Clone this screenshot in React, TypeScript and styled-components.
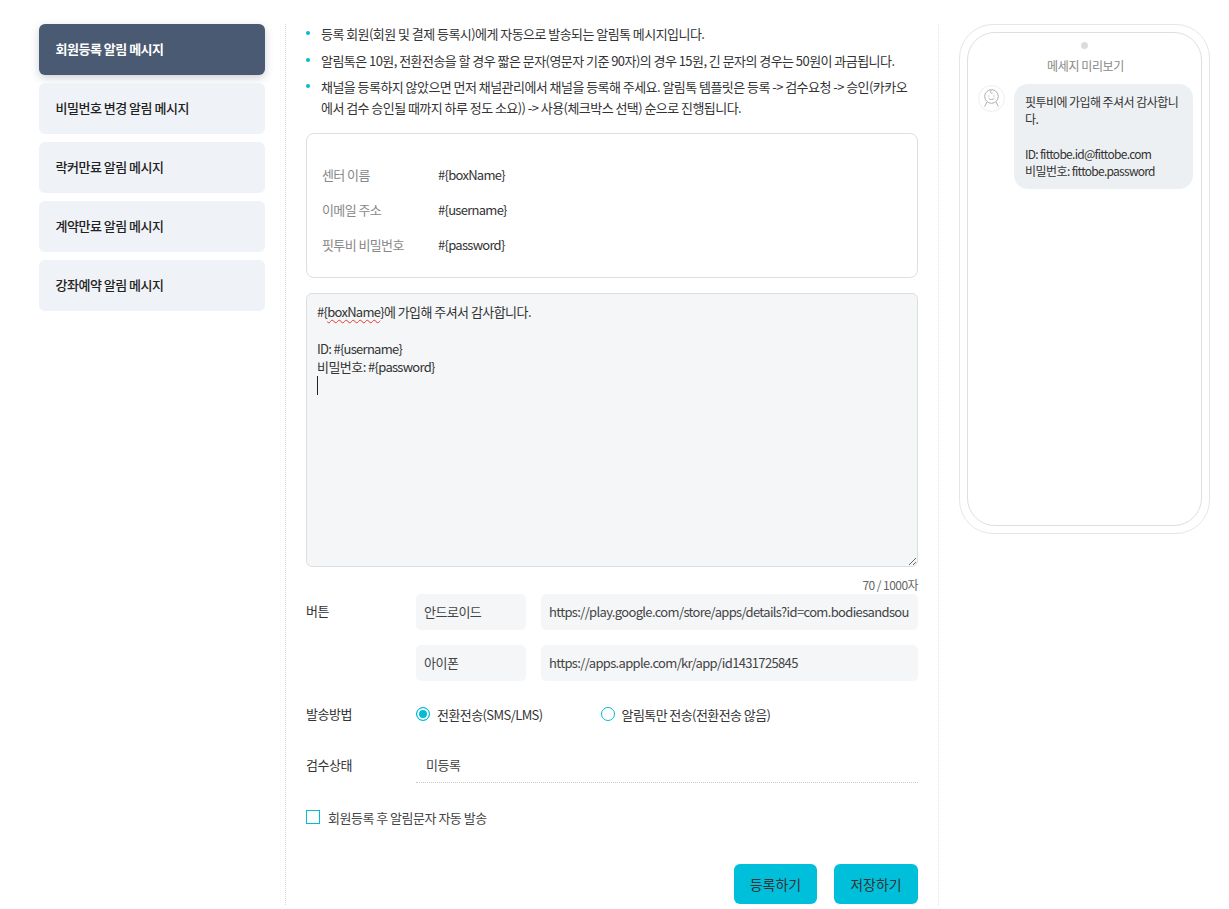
import React from "react";
import styled, { createGlobalStyle } from "styled-components";

const Global = createGlobalStyle`
  html, body { margin: 0; padding: 0; background: #fff; overflow: hidden; }
  body { font-family: "Noto Sans CJK KR", "Noto Sans", sans-serif; color: #333; }
  * { box-sizing: border-box; }
`;

const Page = styled.div`
  width: 1229px;
  height: 909px;
  overflow: hidden;
  display: grid;
  grid-template-columns: 285px 654px 290px;
  padding-top: 24px;
`;

const Sidebar = styled.nav`
  display: flex;
  flex-direction: column;
  gap: 8px;
  padding: 0 20px 0 39px;
`;

const MenuItem = styled.div<{ $active?: boolean }>`
  height: 51px;
  border-radius: 6px;
  padding: 0 16.5px 2px;
  display: flex;
  align-items: center;
  font-size: 13px;
  font-weight: ${(p) => (p.$active ? 700 : 500)};
  letter-spacing: -0.5px;
  color: ${(p) => (p.$active ? "#fff" : "#222")};
  background: ${(p) => (p.$active ? "#4a5a72" : "#eff2f6")};
  box-shadow: ${(p) => (p.$active ? "0 3px 8px rgba(60,70,90,.25)" : "none")};
  position: relative;
`;

const Main = styled.main`
  height: 881px;
  border-left: 1px dotted #d8d8d8;
  border-right: 1px dotted #e2e2e2;
  padding: 0 20px;
  display: flex;
  flex-direction: column;
`;

const Notes = styled.ul`
  list-style: none;
  margin: 0 0 15px;
  padding: 0;
  display: flex;
  flex-direction: column;
  gap: 6px;
`;

const Note = styled.li`
  position: relative;
  padding-left: 15px;
  font-size: 13px;
  line-height: 20.5px;
  letter-spacing: -0.55px;
  color: #333;
  &::before {
    content: "";
    position: absolute;
    left: 0;
    top: 7px;
    width: 4px;
    height: 4px;
    border-radius: 50%;
    background: #00bcd4;
  }
`;

const VarBox = styled.div`
  height: 145px;
  border: 1px solid #dcdfe2;
  border-radius: 8px;
  padding: 23px 15px 0;
  display: flex;
  flex-direction: column;
`;

const VarRow = styled.div`
  height: 35px;
  display: grid;
  grid-template-columns: 116px 1fr;
  align-items: center;
  font-size: 13px;
  letter-spacing: -0.6px;
`;

const VarLabel = styled.span`
  color: #888;
`;

const VarValue = styled.span`
  color: #333;
  letter-spacing: -0.72px;
`;

const Editor = styled.div`
  margin-top: 15px;
  flex: none;
  height: 274px;
  background: #f4f6f8;
  border: 1px solid #dcdfe2;
  border-radius: 6px;
  padding: 9px 10px;
  font-size: 13px;
  line-height: 18.3px;
  letter-spacing: -0.55px;
  color: #333;
  white-space: pre-wrap;
  overflow: auto;
  resize: vertical;
`;

const Latin = styled.span`
  letter-spacing: -0.72px;
`;

const Squiggle = styled.span`
  text-decoration: underline wavy #e53935 1px;
  text-underline-offset: 2px;
`;

const Caret = styled.span`
  display: inline-block;
  width: 1px;
  height: 19px;
  background: #222;
  vertical-align: top;
`;

const Counter = styled.div`
  flex: none;
  height: 27px;
  padding-top: 9px;
  text-align: right;
  font-size: 12px;
  letter-spacing: -0.55px;
  color: #666;
  line-height: 18px;
  white-space: nowrap;
`;

const FormRow = styled.div<{ $h: number; $mt?: number }>`
  display: grid;
  grid-template-columns: 110px 1fr;
  min-height: ${(p) => p.$h}px;
  margin-top: ${(p) => p.$mt ?? 0}px;
  align-items: start;
`;

const RowLabel = styled.div<{ $h: number }>`
  font-size: 13px;
  letter-spacing: -0.5px;
  color: #333;
  line-height: ${(p) => p.$h}px;
`;

const ButtonStack = styled.div`
  display: flex;
  flex-direction: column;
  gap: 15px;
`;

const LinkRow = styled.div`
  display: grid;
  grid-template-columns: 110px 1fr;
  gap: 15px;
`;

const Field = styled.div<{ $url?: boolean }>`
  height: 36px;
  padding: 0 8px;
  border-radius: 5px;
  background: #f4f6f8;
  font-size: 13px;
  line-height: 36px;
  letter-spacing: ${(p) => (p.$url ? "-0.66px" : "-0.5px")};
  color: #444;
  white-space: nowrap;
  overflow: hidden;
`;

const RadioGroup = styled.div`
  display: flex;
  align-items: center;
  height: 36px;
`;

const RadioItem = styled.label<{ $w: number }>`
  display: flex;
  align-items: center;
  gap: 7px;
  width: ${(p) => p.$w}px;
  font-size: 13px;
  letter-spacing: -0.58px;
  color: #333;
`;

const RadioDot = styled.span<{ $on?: boolean }>`
  width: 14px;
  height: 14px;
  border-radius: 50%;
  border: 1.5px solid #00bcd4;
  background: ${(p) => (p.$on ? "#00bcd4" : "#fff")};
  box-shadow: ${(p) => (p.$on ? "inset 0 0 0 2px #fff" : "none")};
  flex: none;
`;

const StatusValue = styled.div`
  height: 36px;
  padding: 0 10px;
  border-bottom: 1px dotted #c8c8c8;
  font-size: 13px;
  line-height: 36px;
  letter-spacing: -0.5px;
  color: #444;
`;

const CheckRow = styled.label`
  display: flex;
  align-items: center;
  gap: 8px;
  margin: 26px 0 4px;
  height: 16px;
  font-size: 13px;
  letter-spacing: -0.5px;
  color: #444;
`;

const CheckBox = styled.span`
  width: 14px;
  height: 14px;
  border: 1px solid #00bcd4;
  flex: none;
`;

const Actions = styled.div`
  margin-top: 35px;
  display: flex;
  justify-content: flex-end;
  gap: 17px;
`;

const ActionButton = styled.button`
  height: 40px;
  border: 0;
  border-radius: 6px;
  padding: 0;
  background: #00bfdb;
  color: #333;
  font-family: inherit;
  font-size: 14px;
  letter-spacing: 0;
  &:first-child { width: 83px; }
  &:last-child { width: 84px; }
`;

const Aside = styled.aside`
  padding-left: 20px;
`;

const PhoneOuter = styled.div`
  width: 251px;
  height: 510px;
  border: 1px solid #e6e6e6;
  border-radius: 34px;
  padding: 7px;
`;

const PhoneInner = styled.div`
  height: 494px;
  border: 1px solid #dedede;
  border-radius: 28px;
  padding: 8px 8px 0 10px;
  display: flex;
  flex-direction: column;
  align-items: stretch;
`;

const Camera = styled.div`
  width: 7px;
  height: 7px;
  border-radius: 50%;
  background: #d9dde0;
  align-self: center;
  margin: 1px 0 0 -2px;
`;

const PreviewTitle = styled.div`
  margin-top: 8px;
  text-align: center;
  font-size: 12px;
  line-height: 18px;
  letter-spacing: -0.4px;
  color: #888;
`;

const Message = styled.div`
  margin-top: 9px;
  display: flex;
  gap: 9px;
  align-items: flex-start;
`;

const Avatar = styled.div`
  width: 27px;
  height: 27px;
  border-radius: 50%;
  border: 1px solid #eeeeee;
  display: flex;
  align-items: center;
  justify-content: center;
  flex: none;
  margin-top: 1px;
`;

const Bubble = styled.div`
  width: 179px;
  padding: 9px 12px 10px 11px;
  border-radius: 14px;
  background: #edf0f2;
  font-size: 12px;
  line-height: 17.2px;
  letter-spacing: -0.56px;
  color: #333;
  white-space: pre-wrap;
`;

const menu = [
  "회원등록 알림 메시지",
  "비밀번호 변경 알림 메시지",
  "락커만료 알림 메시지",
  "계약만료 알림 메시지",
  "강좌예약 알림 메시지",
];

const notes = [
  "등록 회원(회원 및 결제 등록시)에게 자동으로 발송되는 알림톡 메시지입니다.",
  "알림톡은 10원, 전환전송을 할 경우 짧은 문자(영문자 기준 90자)의 경우 15원, 긴 문자의 경우는 50원이 과금됩니다.",
  "채널을 등록하지 않았으면 먼저 채널관리에서 채널을 등록해 주세요. 알림톡 템플릿은 등록 -> 검수요청 -> 승인(카카오에서 검수 승인될 때까지 하루 정도 소요)) -> 사용(체크박스 선택) 순으로 진행됩니다.",
];

const vars = [
  ["센터 이름", "#{boxName}"],
  ["이메일 주소", "#{username}"],
  ["핏투비 비밀번호", "#{password}"],
];

export default function App() {
  return (
    <Page>
      <Global />
      <Sidebar>
        {menu.map((m, i) => (
          <MenuItem key={m} $active={i === 0}>{m}</MenuItem>
        ))}
      </Sidebar>
      <Main>
        <Notes>
          {notes.map((n) => (
            <Note key={n}>{n}</Note>
          ))}
        </Notes>
        <VarBox>
          {vars.map(([l, v]) => (
            <VarRow key={l}>
              <VarLabel>{l}</VarLabel>
              <VarValue>{v}</VarValue>
            </VarRow>
          ))}
        </VarBox>
        <Editor>
          <Latin>{"#{"}<Squiggle>boxName</Squiggle>{"}"}</Latin>{"에 가입해 주셔서 감사합니다.\n\n"}
          <Latin>{"ID: #{username}"}</Latin>{"\n비밀번호: "}<Latin>{"#{password}"}</Latin>{"\n"}<Caret />
        </Editor>
        <Counter>70 / 1000자</Counter>
        <FormRow $h={87}>
          <RowLabel $h={34}>버튼</RowLabel>
          <ButtonStack>
            <LinkRow>
              <Field>안드로이드</Field>
              <Field $url>https://play.google.com/store/apps/details?id=com.bodiesandsou</Field>
            </LinkRow>
            <LinkRow>
              <Field>아이폰</Field>
              <Field $url>https://apps.apple.com/kr/app/id1431725845</Field>
            </LinkRow>
          </ButtonStack>
        </FormRow>
        <FormRow $h={36} $mt={15}>
          <RowLabel $h={36}>발송방법</RowLabel>
          <RadioGroup>
            <RadioItem $w={184.5}><RadioDot $on />전환전송(SMS/LMS)</RadioItem>
            <RadioItem $w={240}><RadioDot />알림톡만 전송(전환전송 않음)</RadioItem>
          </RadioGroup>
        </FormRow>
        <FormRow $h={36} $mt={15}>
          <RowLabel $h={36}>검수상태</RowLabel>
          <StatusValue>미등록</StatusValue>
        </FormRow>
        <CheckRow><CheckBox />회원등록 후 알림문자 자동 발송</CheckRow>
        <Actions>
          <ActionButton>등록하기</ActionButton>
          <ActionButton>저장하기</ActionButton>
        </Actions>
      </Main>
      <Aside>
        <PhoneOuter>
          <PhoneInner>
            <Camera />
            <PreviewTitle>메세지 미리보기</PreviewTitle>
            <Message>
              <Avatar>
                <svg width="21" height="21" viewBox="0 0 21 21" fill="none" stroke="#b0b0b0" strokeWidth="1">
                  <circle cx="10.5" cy="8.5" r="6.8" />
                  <path d="M10.2 2c-1.3 2-.4 3.6 1.3 3.2" />
                  <path d="M7.6 10.2c1 1.7 4.8 1.7 5.8 0" />
                  <path d="M7.4 8h1M12.6 8h1" />
                  <path d="M6 14l-2.4 4.6M15 14l2.4 4.6" />
                </svg>
              </Avatar>
              <Bubble>
                {"핏투비에 가입해 주셔서 감사합니다.\n\n"}
                <Latin>ID: fittobe.id@fittobe.com</Latin>
                {"\n비밀번호: "}
                <Latin>fittobe.password</Latin>
              </Bubble>
            </Message>
          </PhoneInner>
        </PhoneOuter>
      </Aside>
    </Page>
  );
}
